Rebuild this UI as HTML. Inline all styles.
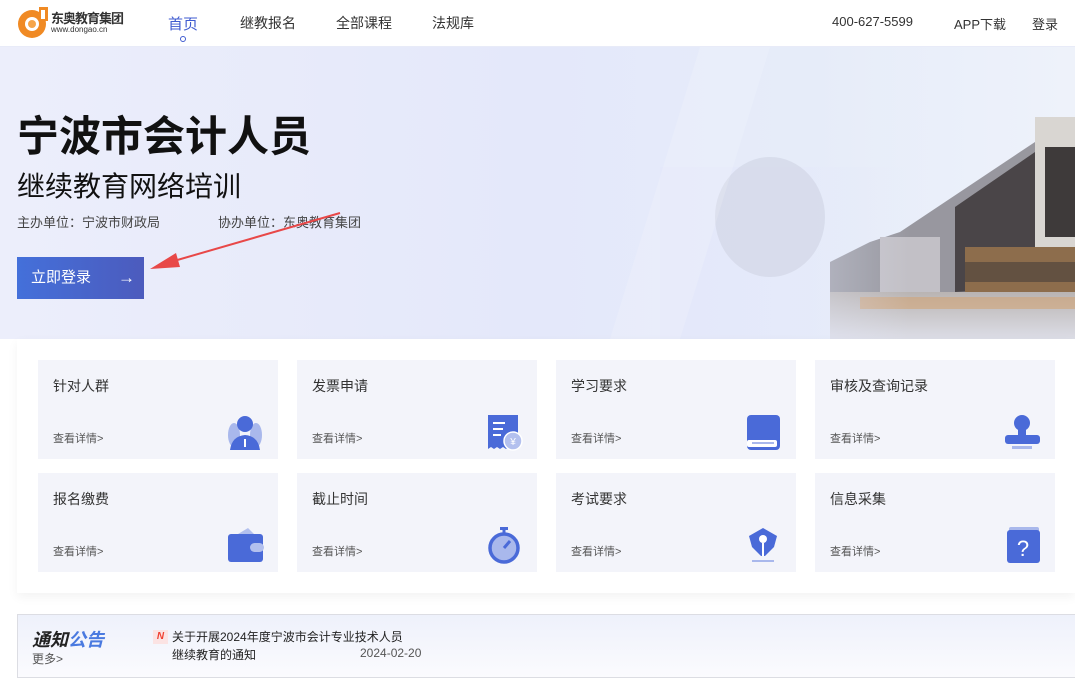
<!DOCTYPE html>
<html><head><meta charset="utf-8"><style>
*{margin:0;padding:0;box-sizing:border-box}
body{width:1075px;height:694px;overflow:hidden;background:#fff;font-family:"Liberation Sans","Noto Sans CJK SC",sans-serif;position:relative;color:#333}
.nav{position:absolute;top:0;left:0;width:1075px;height:47px;background:#fff;border-bottom:1px solid #e8ebf8}
.nav span{position:absolute;top:13px;font-size:14px;color:#333}
.hero{position:absolute;top:47px;left:0;width:1075px;height:292px;background:linear-gradient(90deg,#eceefb 0%,#e4e8fa 50%,#e6ecf9 75%,#eef2fa 100%);overflow:hidden}
.panel{position:absolute;top:339px;left:17px;width:1058px;height:254px;background:#fff;box-shadow:0 4px 10px rgba(0,0,0,.05)}
.card{position:absolute;width:240px;height:99px;background:#f3f4fa}
.card .t{position:absolute;left:15px;top:16px;font-size:14px;color:#333}
.card .d{position:absolute;left:15px;top:70px;font-size:11px;color:#555}
.card svg{position:absolute;right:14px;bottom:8px}
</style></head><body>
<div class="nav">
 <svg style="position:absolute;left:17px;top:5px" width="32" height="34" viewBox="0 0 32 34"><circle cx="15" cy="19" r="14" fill="#f08a24"/><circle cx="15" cy="19" r="7" fill="#fff"/><circle cx="15" cy="19" r="4" fill="#f6a54a"/><rect x="22" y="2" width="9" height="14" fill="#f08a24"/><rect x="24" y="5" width="4" height="9" fill="#fff"/></svg>
 <div style="position:absolute;left:51px;top:8px;font-size:13px;font-weight:bold;color:#333;letter-spacing:-1px">东奥教育集团</div>
 <div style="position:absolute;left:51px;top:25px;font-size:8px;color:#333">www.dongao.cn</div>
 <span style="left:168px;color:#3f5bd0;font-size:15px">首页</span>
 <div style="position:absolute;left:180px;top:36px;width:6px;height:6px;border:1px solid #3f5bd0;border-radius:50%"></div>
 <span style="left:240px">继教报名</span>
 <span style="left:336px">全部课程</span>
 <span style="left:432px">法规库</span>
 <span style="left:832px;font-size:13px;top:14px">400-627-5599</span>
 <span style="left:954px;font-size:13px;top:14px">APP下载</span>
 <span style="left:1032px;font-size:13px;top:14px">登录</span>
</div>
<div class="hero">
 <svg style="position:absolute;left:0;top:0" width="1075" height="292">
  <defs>
  <linearGradient id="f" x1="0" x2="1"><stop offset="0" stop-color="#e4e8fa" stop-opacity="1"/><stop offset="1" stop-color="#e4e8fa" stop-opacity="0"/></linearGradient>
  <linearGradient id="wa" x1="0" y1="0" x2="0" y2="1"><stop offset="0" stop-color="#b9b4b2"/><stop offset="1" stop-color="#dcdde6"/></linearGradient>
  </defs>
  <polygon points="830,215 870,195 900,185 960,145 1035,95 1075,80 1075,250 830,250" fill="#7c7a80" opacity=".75"/>
  <polygon points="955,160 1035,105 1075,95 1075,240 955,245" fill="#4a4548"/>
  <rect x="1035" y="70" width="40" height="170" fill="#d9d6d2"/>
  <rect x="1045" y="100" width="30" height="90" fill="#3e3a3a"/>
  <rect x="965" y="200" width="110" height="45" fill="#8d6d4c"/>
  <rect x="965" y="215" width="110" height="20" fill="#3a3535" opacity=".5"/>
  <rect x="880" y="190" width="60" height="55" fill="#c2c0c6"/>
  <rect x="830" y="245" width="245" height="47" fill="url(#wa)"/>
  <rect x="860" y="250" width="215" height="12" fill="#d0a477" opacity=".6"/>
  <rect x="660" y="120" width="250" height="172" fill="url(#f)"/>
  <ellipse cx="770" cy="170" rx="55" ry="60" fill="#c8ccdc" opacity=".45"/>
  <polygon points="700,0 770,0 680,292 610,292" fill="#fff" opacity=".15"/>
 </svg>
 <div style="position:absolute;left:17px;top:56px;font-size:42px;font-weight:bold;color:#111">宁波市会计人员</div>
 <div style="position:absolute;left:17px;top:118px;font-size:28px;color:#111">继续教育网络培训</div>
 <div style="position:absolute;left:17px;top:165px;font-size:13px;color:#444">主办单位：宁波市财政局</div>
 <div style="position:absolute;left:218px;top:165px;font-size:13px;color:#444">协办单位：东奥教育集团</div>
 <div style="position:absolute;left:17px;top:210px;width:127px;height:42px;background:linear-gradient(90deg,#4470da,#4c5bbd);color:#fff;font-size:15px;line-height:42px;padding-left:14px">立即登录<span style="position:absolute;left:101px;font-size:17px">→</span></div>
 <svg style="position:absolute;left:140px;top:160px" width="210" height="70"><line x1="200" y1="6" x2="20" y2="58" stroke="#e84848" stroke-width="2"/><polygon points="10,62 36,46 40,60" fill="#e84848"/></svg>
</div>
<div class="panel"></div>
<div class="card" style="left:38px;top:360px"><div class="t">针对人群</div><div class="d">查看详情&gt;</div><svg width="38" height="38" viewBox="0 0 38 38"><ellipse cx="8" cy="22" rx="6" ry="12" fill="#a9b8ec"/><ellipse cx="30" cy="22" rx="6" ry="12" fill="#a9b8ec"/><circle cx="19" cy="11" r="8" fill="#4a6ad8"/><path d="M4 37 Q6 23 19 22 Q32 23 34 37Z" fill="#4a6ad8"/><rect x="18" y="26" width="2" height="8" fill="#fff"/></svg></div>
<div class="card" style="left:297px;top:360px"><div class="t">发票申请</div><div class="d">查看详情&gt;</div><svg width="38" height="38" viewBox="0 0 38 38"><path d="M3 2h30v34l-3-2-3 2-3-2-3 2-3-2-3 2-3-2-3 2-3-2-3 2z" fill="#4a6ad8"/><rect x="8" y="9" width="12" height="2" fill="#fff"/><rect x="8" y="15" width="10" height="2" fill="#fff"/><rect x="8" y="21" width="8" height="2" fill="#fff"/><circle cx="28" cy="28" r="9" fill="#b3c0ee" stroke="#fff" stroke-width="1.5"/><text x="28" y="32" font-size="10" text-anchor="middle" fill="#fff">¥</text></svg></div>
<div class="card" style="left:556px;top:360px"><div class="t">学习要求</div><div class="d">查看详情&gt;</div><svg width="38" height="38" viewBox="0 0 38 38"><rect x="3" y="2" width="33" height="35" rx="4" fill="#4a6ad8"/><rect x="3" y="27" width="30" height="7" rx="2" fill="#fff"/><rect x="8" y="29" width="22" height="2" fill="#a9b8ec"/></svg></div>
<div class="card" style="left:815px;top:360px"><div class="t">审核及查询记录</div><div class="d">查看详情&gt;</div><svg width="38" height="38" viewBox="0 0 38 38"><circle cx="19" cy="10" r="8" fill="#4a6ad8"/><rect x="15" y="14" width="8" height="10" fill="#4a6ad8"/><rect x="2" y="22" width="35" height="9" rx="3" fill="#4a6ad8"/><rect x="9" y="33" width="20" height="3" fill="#a9b8ec"/></svg></div>
<div class="card" style="left:38px;top:473px"><div class="t">报名缴费</div><div class="d">查看详情&gt;</div><svg width="38" height="38" viewBox="0 0 38 38"><path d="M12 8 L22 2 L28 8Z" fill="#b3c0ee"/><rect x="2" y="8" width="35" height="28" rx="3" fill="#4a6ad8"/><rect x="24" y="17" width="14" height="9" rx="4.5" fill="#b3c0ee"/></svg></div>
<div class="card" style="left:297px;top:473px"><div class="t">截止时间</div><div class="d">查看详情&gt;</div><svg width="38" height="38" viewBox="0 0 38 38"><rect x="15" y="1" width="8" height="3" fill="#4a6ad8"/><rect x="17.5" y="3" width="3" height="5" fill="#4a6ad8"/><circle cx="19" cy="22" r="14" fill="#a9b8ec" stroke="#4a6ad8" stroke-width="3.5"/><path d="M19 22 L25 15" stroke="#4a6ad8" stroke-width="3"/></svg></div>
<div class="card" style="left:556px;top:473px"><div class="t">考试要求</div><div class="d">查看详情&gt;</div><svg width="38" height="38" viewBox="0 0 38 38"><path d="M19 2 L33 10 L30 21 L21 30 L17 30 L8 21 L5 10Z" fill="#4a6ad8"/><circle cx="19" cy="13" r="4" fill="#fff"/><rect x="18" y="17" width="2" height="13" fill="#fff"/><rect x="8" y="34" width="22" height="2" fill="#a9b8ec"/></svg></div>
<div class="card" style="left:815px;top:473px"><div class="t">信息采集</div><div class="d">查看详情&gt;</div><svg width="38" height="38" viewBox="0 0 38 38"><rect x="6" y="1" width="30" height="6" rx="2" fill="#a9b8ec"/><rect x="4" y="4" width="33" height="33" rx="3" fill="#4a6ad8"/><text x="20" y="30" font-size="22" text-anchor="middle" fill="#fff" font-family="Liberation Sans">?</text></svg></div>
<div style="position:absolute;left:17px;top:614px;width:1060px;height:64px;border:1px solid #dcdde3;background:linear-gradient(180deg,#eef1fb,#fbfbfe)"></div>
<div style="position:absolute;left:32px;top:626px;font-size:18px;font-weight:bold;font-style:italic;color:#222">通知<span style="color:#4a7ae0">公告</span></div>
<div style="position:absolute;left:32px;top:650px;font-size:12px;color:#555">更多&gt;</div>
<div style="position:absolute;left:153px;top:630px;width:15px;height:14px;background:#fbe3e3;color:#f04030;font-size:10px;font-weight:bold;font-style:italic;text-align:center;line-height:14px">N</div>
<div style="position:absolute;left:172px;top:628px;font-size:12px;color:#222">关于开展2024年度宁波市会计专业技术人员</div>
<div style="position:absolute;left:172px;top:646px;font-size:12px;color:#222">继续教育的通知</div>
<div style="position:absolute;left:360px;top:646px;font-size:12px;color:#555">2024-02-20</div>
</body></html>
